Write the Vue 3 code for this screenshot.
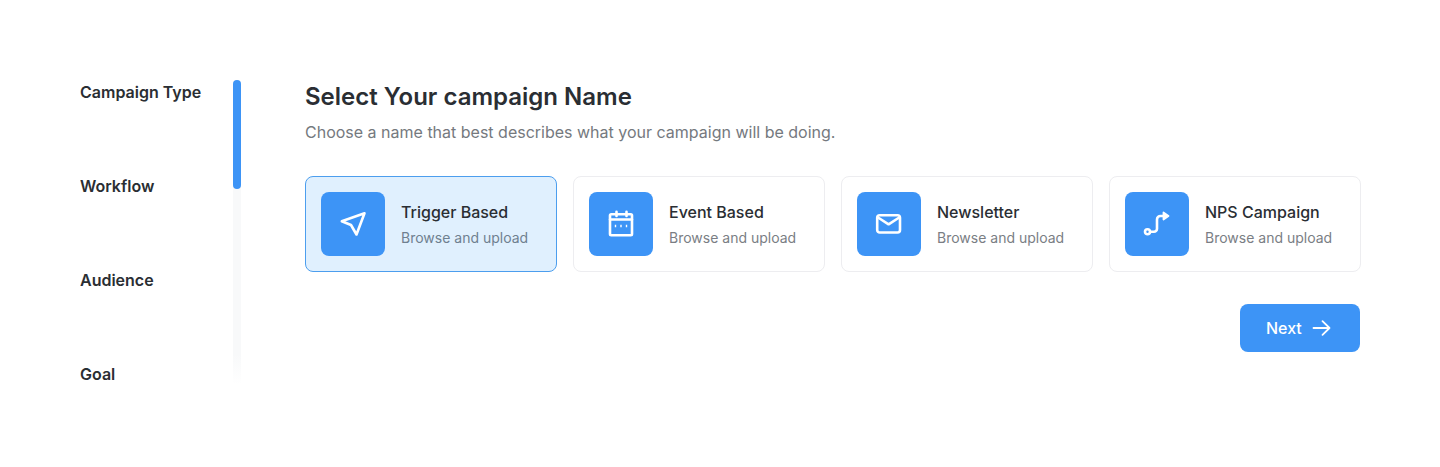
<script setup>
const steps = ['Campaign Type', 'Workflow', 'Audience', 'Goal']
const cards = [
  { title: 'Trigger Based', icon: 'send', active: true },
  { title: 'Event Based', icon: 'calendar' },
  { title: 'Newsletter', icon: 'mail' },
  { title: 'NPS Campaign', icon: 'route' },
]
</script>

<template>
  <div class="page">
    <aside class="side">
      <ul class="steps">
        <li v-for="s in steps" :key="s">{{ s }}</li>
      </ul>
      <div class="track"><div class="thumb"></div></div>
    </aside>
    <main class="main">
      <h1>Select Your campaign Name</h1>
      <p class="sub">Choose a name that best describes what your campaign will be doing.</p>
      <div class="cards">
        <div v-for="c in cards" :key="c.title" class="card" :class="{ active: c.active }">
          <div class="ico">
            <svg width="32" height="32" viewBox="0 0 32 32" fill="none" stroke="#fff" stroke-width="2.600" stroke-linecap="round" stroke-linejoin="round">
              <path v-if="c.icon === 'send'" d="M27.500 5.200 4.800 13.300 14 17 19.500 26.500Z" />
              <template v-else-if="c.icon === 'calendar'">
                <rect x="5" y="6.200" width="22" height="21" rx="1.200" />
                <path d="M5 11.500h22M11.500 3.800V8M21.500 3.800V8" />
                <path d="M9.800 18h1.400M15.300 18h1.400M20.800 18h1.400" stroke-width="2.600" stroke-linecap="butt" />
              </template>
              <template v-else-if="c.icon === 'mail'">
                <rect x="4.200" y="7.200" width="22.800" height="17.300" rx="2.500" />
                <path d="M5 9.500 15.600 16.300 26.200 9.500" />
              </template>
              <template v-else>
                <circle cx="6.500" cy="23.700" r="2.500" />
                <path d="M9.500 23.700H13a3 3 0 0 0 3-3v-9.200a3.500 3.500 0 0 1 3.500-3.500H25" />
                <path d="M22.500 4.500 27.500 8 22.500 11.500Z" fill="#fff" stroke-width="1.800" />
              </template>
            </svg>
          </div>
          <div class="txt">
            <div class="title">{{ c.title }}</div>
            <div class="desc">Browse and upload</div>
          </div>
        </div>
      </div>
      <div class="actions">
        <button class="next">
          Next
          <svg width="20" height="20" viewBox="0 0 20 20" fill="none" stroke="#fff" stroke-width="1.800" stroke-linecap="round" stroke-linejoin="round">
            <path d="M1.500 10h16M10.500 3.200 17.500 10 10.500 16.800" />
          </svg>
        </button>
      </div>
    </main>
  </div>
</template>

<style scoped>
.page {
  display: flex;
  gap: 64px;
  padding: 80px 79px 0 80px;
  height: 467px;
  box-sizing: border-box;
  background: #fff;
  font-family: Inter, "Liberation Sans", sans-serif;
  color: #2a2e33;
}
.side {
  display: flex;
  justify-content: space-between;
  width: 161px;
  height: 305px;
  overflow: hidden;
}
.steps {
  list-style: none;
  margin: 0;
  padding: 0;
  display: flex;
  flex-direction: column;
  gap: 70px;
  font-size: 16px;
  line-height: 24px;
  font-weight: 600;
}
.track {
  width: 8px;
  height: 100%;
  border-radius: 4px;
  background: linear-gradient(#f8f9fa 0%, #f8f9fa 90%, #ffffff 100%);
}
.thumb {
  height: 109px;
  border-radius: 4px;
  background: #3d94f6;
}
.main {
  flex: 1;
  min-width: 0;
}
h1 {
  margin: 0;
  font-size: 24px;
  line-height: 34px;
  font-weight: 600;
}
.sub {
  margin: 6px 0 0;
  font-size: 16px;
  line-height: 24px;
  color: #75797e;
}
.cards {
  display: grid;
  grid-template-columns: repeat(4, 252px);
  gap: 16px;
  margin-top: 32px;
}
.card {
  display: flex;
  align-items: center;
  gap: 16px;
  height: 96px;
  padding: 0 15px;
  box-sizing: border-box;
  border: 1px solid #ededf0;
  border-radius: 8px;
  background: #fff;
}
.card.active {
  background: #e0f0fe;
  border-color: #4c9eee;
}
.ico {
  width: 64px;
  height: 64px;
  flex: none;
  display: flex;
  align-items: center;
  justify-content: center;
  border-radius: 8px;
  background: #3d94f6;
}
.title {
  font-size: 16px;
  line-height: 24px;
  font-weight: 500;
  color: #2a2e33;
}
.desc {
  margin-top: 4px;
  font-size: 14px;
  line-height: 20px;
  color: #7a7e84;
}
.active .desc {
  color: #6f8090;
}
.actions {
  display: flex;
  justify-content: flex-end;
  margin-top: 32px;
  padding-right: 1px;
}
.next {
  display: flex;
  align-items: center;
  justify-content: flex-start;
  gap: 10px;
  width: 120px;
  height: 48px;
  padding: 0 0 0 26px;
  border: 0;
  border-radius: 8px;
  background: #3d94f6;
  color: #fff;
  font: 500 16px/24px Inter, "Liberation Sans", sans-serif;
}
</style>
